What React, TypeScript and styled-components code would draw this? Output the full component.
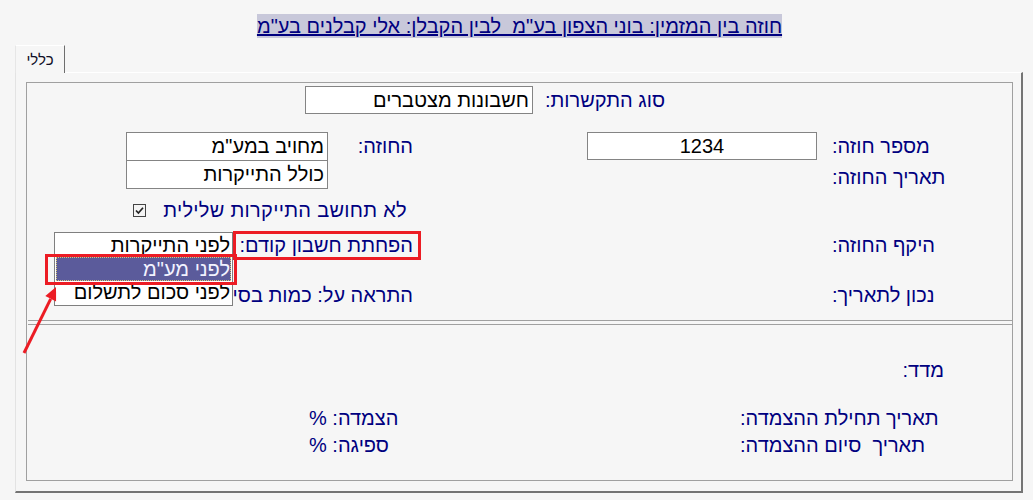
import styled, { createGlobalStyle } from 'styled-components';

const GlobalStyle = createGlobalStyle`
  html, body {
    margin: 0;
    padding: 0;
    background: #f6f6f6;
  }
  body {
    font-family: "Liberation Sans", Arial, "DejaVu Sans", sans-serif;
  }
`;

const Page = styled.div`
  position: relative;
  width: 1033px;
  height: 500px;
  overflow: hidden;
  background: #f6f6f6;
`;

const TitleBar = styled.div`
  display: flex;
  justify-content: center;
  padding: 14px 0 0 6px;
  height: 24px;
`;

const Title = styled.span`
  direction: rtl;
  font-size: 20px;
  line-height: 24px;
  color: #000080;
  background: #c8c8da;
  text-decoration: underline;
  white-space: pre;
`;

const TabStrip = styled.div`
  display: flex;
  margin-top: 7px;
  padding-left: 15px;
  height: 27px;
`;

const Tab = styled.div`
  width: 50px;
  height: 28px;
  box-sizing: border-box;
  border-top: 1px solid #ffffff;
  border-left: 1px solid #e6e6e6;
  border-right: 1px solid #6e6e6e;
  background: #f6f6f6;
  display: flex;
  align-items: center;
  justify-content: center;
  font-size: 15px;
  color: #101028;
  direction: rtl;
  position: relative;
  z-index: 1;
  padding-bottom: 1px;
`;

const Panel = styled.div`
  margin-left: 15px;
  width: 1008px;
  height: 421px;
  box-sizing: border-box;
  border-top: 1px solid #ffffff;
  border-left: 1px solid #e3e3e3;
  border-right: 2px solid #747474;
  border-bottom: 2px solid #747474;
  padding: 9px 8px 10px 10px;
`;

const Frame = styled.div`
  height: 399px;
  box-sizing: border-box;
  border: 1px solid #a0a0a0;
  direction: rtl;
  display: flex;
  flex-direction: column;
`;

const Row = styled.div<{ $top: number; $h: number; $right: number }>`
  display: flex;
  align-items: flex-start;
  margin-top: ${p => p.$top}px;
  height: ${p => p.$h}px;
  padding-right: ${p => p.$right}px;
  flex-shrink: 0;
`;

const Label = styled.div<{ $w?: number; $align?: string; $lh?: number; $gap?: number }>`
  ${p => (p.$w ? `width: ${p.$w}px;` : '')}
  flex-shrink: 0;
  margin-left: ${p => p.$gap || 0}px;
  font-size: 20px;
  line-height: ${p => p.$lh || 28}px;
  color: #000080;
  text-align: ${p => p.$align || 'right'};
  white-space: pre;
`;

const Column = styled.div<{ $w: number; $gap?: number }>`
  display: flex;
  flex-direction: column;
  width: ${p => p.$w}px;
  margin-left: ${p => p.$gap || 0}px;
  flex-shrink: 0;
`;

const Field = styled.div<{ $w: number; $h?: number; $align?: string; $gap?: number }>`
  width: ${p => p.$w}px;
  height: ${p => p.$h || 28}px;
  margin-left: ${p => p.$gap || 0}px;
  box-sizing: border-box;
  border: 1px solid #848484;
  background: #ffffff;
  padding: 0 3px;
  font-size: 20px;
  line-height: ${p => (p.$h || 28) - 2}px;
  color: #000000;
  text-align: ${p => p.$align || 'right'};
  white-space: pre;
  flex-shrink: 0;
  & + & {
    margin-top: -1px;
  }
`;

const CheckRow = styled.div`
  display: flex;
  align-items: center;
  margin-top: 13px;
  height: 16px;
  padding-right: 605px;
`;

const CheckLabel = styled.div`
  width: 261px;
  font-size: 20px;
  line-height: 16px;
  letter-spacing: 0.3px;
  color: #000080;
  text-align: right;
  white-space: pre;
`;

const CheckBox = styled.span`
  width: 13px;
  height: 13px;
  box-sizing: border-box;
  border: 1px solid #444444;
  background: #f4f4f4;
  display: flex;
  align-items: center;
  justify-content: center;
`;

const Separator = styled.div`
  margin: 11px 0 0 1px;
  height: 3px;
  border-top: 1px solid #a0a0a0;
  border-bottom: 1px solid #a0a0a0;
  flex-shrink: 0;
`;

const ListBox = styled.div`
  position: absolute;
  left: 54px;
  top: 232px;
  width: 179px;
  height: 74px;
  box-sizing: border-box;
  border: 1px solid #7f7f7f;
  background: #ffffff;
  direction: rtl;
  z-index: 2;
`;

const Option = styled.div<{ $selected?: boolean; $h: number }>`
  height: ${p => p.$h}px;
  margin: 0 1px;
  box-sizing: border-box;
  padding-right: 1px;
  font-size: 20px;
  line-height: ${p => p.$h}px;
  white-space: pre;
  color: ${p => (p.$selected ? '#f2f2ff' : '#000000')};
  background: ${p => (p.$selected ? '#5b5b9b' : 'transparent')};
  outline: ${p => (p.$selected ? '1px dotted #d8c878' : 'none')};
  outline-offset: -1px;
`;

const Marker = styled.div<{ $x: number; $y: number; $w: number; $h: number }>`
  position: absolute;
  left: ${p => p.$x}px;
  top: ${p => p.$y}px;
  width: ${p => p.$w}px;
  height: ${p => p.$h}px;
  box-sizing: border-box;
  border: 3px solid #ec1c24;
  z-index: 3;
`;

const Arrow = styled.svg`
  position: absolute;
  left: 0;
  top: 270px;
  z-index: 3;
`;

export default function App() {
  return (
    <>
      <GlobalStyle />
      <Page>
        <TitleBar>
          <Title>{'חוזה בין המזמין: בוני הצפון בע"מ  לבין הקבלן: אלי קבלנים בע"מ'}</Title>
        </TitleBar>
        <TabStrip>
          <Tab>כללי</Tab>
        </TabStrip>
        <Panel>
          <Frame>
            <Row $top={3} $h={28} $right={347}>
              <Label $w={132}>סוג התקשרות:</Label>
              <Field $w={228}>חשבונות מצטברים</Field>
            </Row>

            <Row $top={18} $h={57} $right={57}>
              <Column $w={123}>
                <Label $align="left">מספר חוזה:</Label>
                <Label $align="left" $lh={34}>תאריך החוזה:</Label>
              </Column>
              <Field $w={230} $align="center" $gap={174} style={{ marginRight: 15 }}>
                1234
              </Field>
              <Label $w={85}>החוזה:</Label>
              <Column $w={202}>
                <Field $w={202} $h={29}>{'מחויב במע"מ'}</Field>
                <Field $w={202} $h={29}>כולל התייקרות</Field>
              </Column>
            </Row>

            <CheckRow>
              <CheckLabel>לא תחושב התייקרות שלילית</CheckLabel>
              <CheckBox>
                <svg width="11" height="11" viewBox="0 0 11 11">
                  <path d="M2 5.5 L4.4 8 L9 2.8" fill="none" stroke="#222" strokeWidth="1.7" />
                </svg>
              </CheckBox>
            </CheckRow>

            <Row $top={13} $h={28} $right={57}>
              <Label $w={123} $align="left" $gap={419}>היקף החוזה:</Label>
              <Label>הפחתת חשבון קודם:</Label>
            </Row>

            <Row $top={22} $h={28} $right={57}>
              <Label $w={123} $align="left" $gap={419}>נכון לתאריך:</Label>
              <Label>התראה על: כמות בסיס</Label>
            </Row>

            <Separator />

            <Row $top={31} $h={28} $right={68}>
              <Label>מדד:</Label>
            </Row>

            <Row $top={21} $h={27} $right={62}>
              <Label $w={210} $align="left" $lh={27} $gap={339}>תאריך תחילת ההצמדה:</Label>
              <Label $w={92} $align="left" $lh={27}>הצמדה: %</Label>
            </Row>
            <Row $top={0} $h={27} $right={62}>
              <Label $w={210} $align="left" $lh={27} $gap={339}>תאריך  סיום ההצמדה:</Label>
              <Label $w={92} $align="left" $lh={27}>ספיגה: %</Label>
            </Row>
          </Frame>
        </Panel>

        <ListBox>
          <Option $h={24}>לפני התייקרות</Option>
          <Option $h={24} $selected>{'לפני מע"מ'}</Option>
          <Option $h={23}>לפני סכום לתשלום</Option>
        </ListBox>

        <Marker $x={233} $y={231} $w={188} $h={29} />
        <Marker $x={45} $y={254} $w={192} $h={31} />

        <Arrow width="80" height="100" viewBox="0 0 80 100">
          <line x1="24" y1="83" x2="50.7" y2="28.8" stroke="#ec1c24" strokeWidth="3" />
          <polygon points="56,17 56.1,31.4 45.3,26.1" fill="#ec1c24" />
        </Arrow>
      </Page>
    </>
  );
}
